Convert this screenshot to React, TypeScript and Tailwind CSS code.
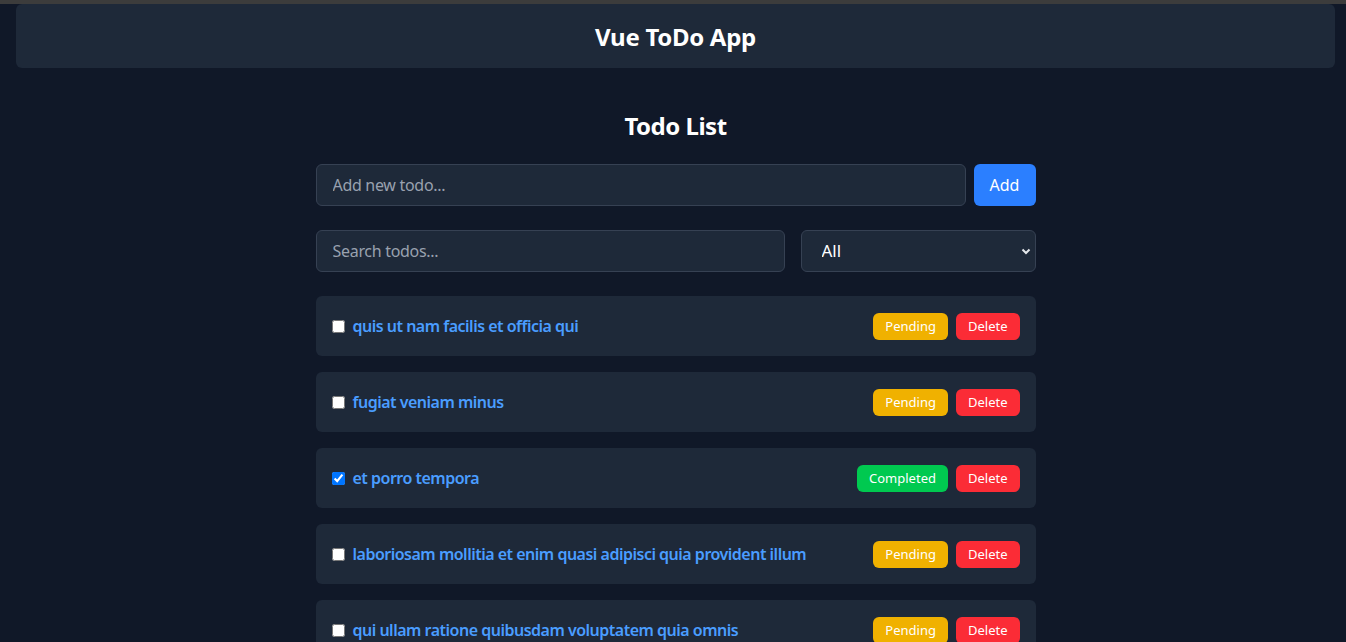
import React from "react";

const todos = [
  { title: "quis ut nam facilis et officia qui", done: false },
  { title: "fugiat veniam minus", done: false },
  { title: "et porro tempora", done: true },
  { title: "laboriosam mollitia et enim quasi adipisci quia provident illum", done: false },
  { title: "qui ullam ratione quibusdam voluptatem quia omnis", done: false },
];

export default function App() {
  return (
    <div
      className="h-[642px] overflow-hidden bg-[#101828] text-white"
      style={{ fontFamily: '"Noto Sans", "Open Sans", sans-serif' }}
    >
      <div className="h-[4px] bg-[#3c3c3c]" />
      <div className="pl-[16px] pr-[11px]">
        <header className="h-[64px] rounded-md bg-[#1e2939] flex items-center justify-center">
          <h1 className="text-[24px] font-bold leading-none tracking-[-0.3px] pt-[2px]">Vue ToDo App</h1>
        </header>
        <main className="w-[720px] mx-auto pt-[42px]">
          <h2 className="text-[24px] font-bold text-center leading-[32px] h-[32px] tracking-[-0.5px]">Todo List</h2>
          <div className="flex gap-2 mt-[22px]">
            <input
              type="text"
              placeholder="Add new todo..."
              className="w-[650px] h-[42px] rounded-md bg-[#1e2939] border border-[#364153] px-4 text-[16px] tracking-[-0.3px] text-white placeholder:text-[#99a1af] outline-none"
            />
            <button className="w-[62px] h-[42px] rounded-md bg-[#2b7fff] text-white text-[16px]">Add</button>
          </div>
          <div className="flex gap-4 mt-[24px]">
            <input
              type="text"
              placeholder="Search todos..."
              className="w-[469px] h-[42px] rounded-md bg-[#1e2939] border border-[#364153] px-4 text-[16px] tracking-[-0.3px] text-white placeholder:text-[#99a1af] outline-none"
            />
            <div className="w-[235px] relative">
              <select className="w-full h-[42px] appearance-none rounded-md bg-[#1e2939] border border-[#364153] pl-5 text-[17px] text-white outline-none">
                <option>All</option>
                <option>Completed</option>
                <option>Pending</option>
              </select>
              <svg
                className="absolute right-[5px] top-[18px] pointer-events-none"
                width="10"
                height="8"
                viewBox="0 0 10 8"
              >
                <path d="M1.5 1.5 L5 5 L8.5 1.5" stroke="#e5e7eb" strokeWidth="2" fill="none" />
              </svg>
            </div>
          </div>
          <ul className="mt-[24px] flex flex-col gap-4">
            {todos.map((t, i) => (
              <li
                key={i}
                className="h-[60px] shrink-0 rounded-md bg-[#1e2939] px-4 flex items-center justify-between"
              >
                <div className="flex items-center gap-2">
                  <input
                    type="checkbox"
                    defaultChecked={t.done}
                    className="w-[13px] h-[13px] m-0"
                  />
                  <span className="text-[16px] font-semibold tracking-[-0.5px] text-[#4a9dff]">{t.title}</span>
                </div>
                <div className="flex items-center gap-2">
                  {t.done ? (
                    <span className="h-[27px] px-3 pt-[1px] rounded-md bg-[#00c950] text-white text-[13px] flex items-center">
                      Completed
                    </span>
                  ) : (
                    <span className="h-[27px] px-3 pt-[1px] rounded-md bg-[#f0b100] text-white text-[13px] flex items-center">
                      Pending
                    </span>
                  )}
                  <button className="h-[27px] px-3 pt-[1px] rounded-md bg-[#fb2c36] text-white text-[13px] flex items-center">
                    Delete
                  </button>
                </div>
              </li>
            ))}
          </ul>
        </main>
      </div>
    </div>
  );
}
